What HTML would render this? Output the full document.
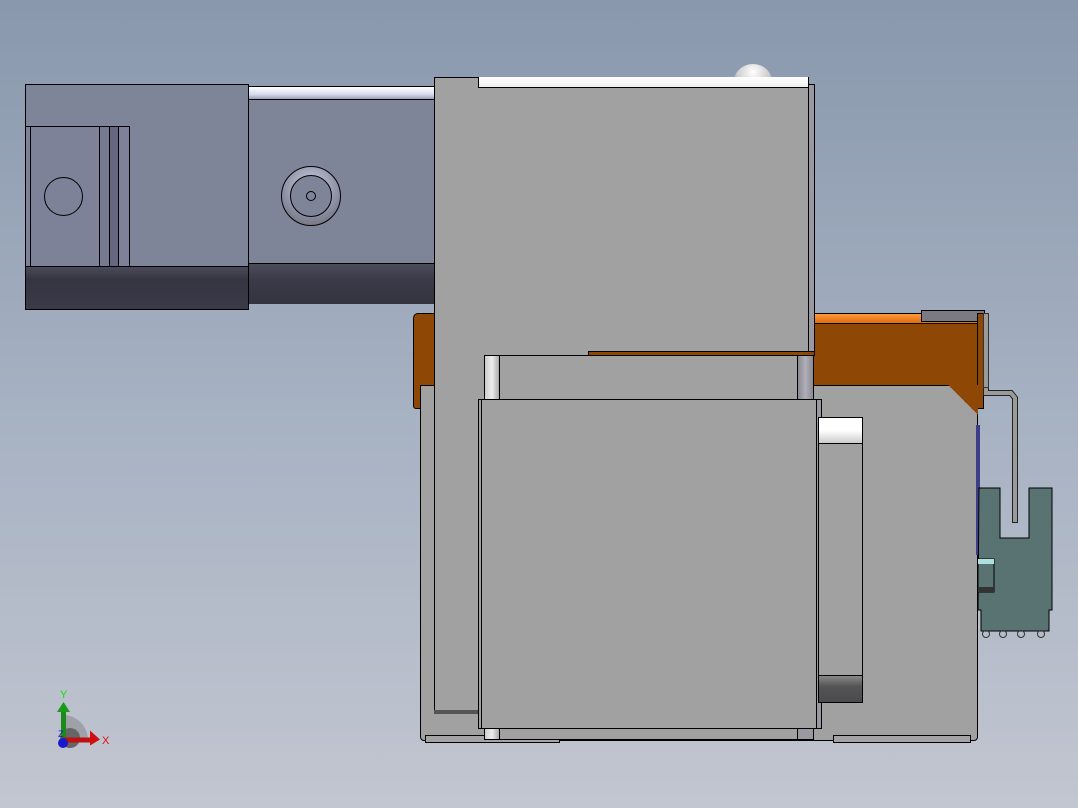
<!DOCTYPE html>
<html><head><style>
body{margin:0;width:1078px;height:808px;overflow:hidden;background:linear-gradient(#8998ad,#a6b1c2 50%,#c2c6d0);position:relative;font-family:"Liberation Sans",sans-serif}
div{position:absolute;box-sizing:border-box}
.b{border:1px solid #000}
.g{background:#a1a1a1}
</style></head><body>
<!-- left block -->
<div class="b" style="left:25px;top:84px;width:224px;height:226px;background:#7f8599"></div>
<div class="b" style="left:25px;top:126px;width:105px;height:141px;background:#7d8298"></div>
<div style="left:30px;top:127px;width:1px;height:139px;background:#000"></div>
<div style="left:99px;top:127px;width:11px;height:139px;background:#767a90;border-left:1px solid #000;border-right:1px solid #000"></div>
<div style="left:110px;top:127px;width:9px;height:139px;background:#666680;border-right:1px solid #000"></div>
<div class="b" style="left:44px;top:177px;width:39px;height:39px;border-radius:50%"></div>
<div style="left:26px;top:266px;width:222px;height:43px;background:linear-gradient(#4a4a58,#353542 30%,#3a3a48);border-top:1px solid #000"></div>
<!-- rail -->
<div class="b" style="left:248px;top:86px;width:188px;height:218px;background:#7f8599"></div>
<div style="left:249px;top:87px;width:186px;height:13px;background:linear-gradient(#fff,#d8dcef 60%,#9ba0b8);border-bottom:1px solid #000"></div>
<div style="left:249px;top:263px;width:186px;height:41px;background:linear-gradient(#4c4c5a,#3a3a48 40%,#343440);border-top:1px solid #000"></div>
<div style="left:281px;top:166px;width:60px;height:60px;border-radius:50%;border:1px solid #000;background:radial-gradient(circle at 50% 35%,#d0d2e4,#8a8ca0 60%,#666)"></div>
<div style="left:290px;top:175px;width:42px;height:42px;border-radius:50%;border:1px solid #000;background:#7f8599"></div>
<div style="left:306px;top:191px;width:10px;height:10px;border-radius:50%;border:1px solid #000"></div>
<!-- knob -->
<div style="left:733px;top:64px;width:40px;height:20px;border-radius:20px 20px 0 0;background:radial-gradient(circle at 50% 40%,#fff,#ccc 70%,#888)"></div>
<!-- orange -->
<div class="b" style="left:413px;top:313px;width:22px;height:96px;background:#8f4705;border-radius:5px 0 0 3px"></div>
<div class="b" style="left:813px;top:313px;width:166px;height:73px;background:#8f4705"></div>
<div style="left:814px;top:314px;width:164px;height:10px;background:linear-gradient(#ff9a3a,#e06d10);border-bottom:1px solid #000"></div>
<div class="b" style="left:921px;top:310px;width:64px;height:12px;background:#7a7a80"></div>
<div class="b" style="left:977px;top:313px;width:7px;height:96px;background:#8f4705"></div>
<div style="left:983px;top:313px;width:6px;height:75px;background:#9a9a9a;border:1px solid #333"></div>
<!-- wire -->
<svg style="position:absolute;left:0;top:0" width="1078" height="808"><path d="M986 388 L986 393 L1011 393 L1015 398 L1015 523" fill="none" stroke="#222" stroke-width="6"/><path d="M986 388 L986 393 L1011 393 L1015 398 L1015 523" fill="none" stroke="#9a9a9a" stroke-width="4"/></svg>
<!-- lower body -->
<div class="b g" style="left:420px;top:385px;width:558px;height:356px;border-radius:0 0 4px 4px"></div>
<div style="left:948px;top:385px;width:30px;height:30px;background:linear-gradient(225deg,#8f4705 50%,transparent 50%)"></div>
<div style="left:976px;top:425px;width:4px;height:130px;background:#3e3e88"></div>
<div class="b" style="left:425px;top:735px;width:135px;height:8px;background:#a4a4a4"></div>
<div class="b" style="left:833px;top:735px;width:138px;height:8px;background:#a4a4a4"></div>
<!-- main column -->
<div class="b g" style="left:434px;top:77px;width:375px;height:637px"></div>
<div style="left:478px;top:77px;width:331px;height:11px;background:linear-gradient(#fff,#eee);border:1px solid #000;border-top:none"></div>
<div class="b" style="left:808px;top:84px;width:7px;height:271px;background:#9a98a0"></div>
<div style="left:434px;top:710px;width:46px;height:4px;background:#555"></div>
<div style="left:588px;top:351px;width:227px;height:5px;background:#8f4705;border:1px solid #000"></div>
<!-- upper rect -->
<div class="b g" style="left:484px;top:355px;width:330px;height:45px"></div>
<div style="left:485px;top:356px;width:15px;height:43px;background:linear-gradient(90deg,#ccc,#eee,#aaa);border-right:1px solid #000"></div>
<div style="left:797px;top:356px;width:16px;height:43px;background:linear-gradient(90deg,#8a8890,#b0aeb6,#8a8890);border-left:1px solid #000"></div>
<div class="b g" style="left:484px;top:726px;width:330px;height:14px"></div>
<div style="left:485px;top:727px;width:15px;height:12px;background:linear-gradient(90deg,#ccc,#eee,#aaa);border-right:1px solid #000"></div>
<div style="left:797px;top:727px;width:16px;height:12px;background:#9a98a0;border-left:1px solid #000"></div>
<!-- front plate -->
<div class="b g" style="left:478px;top:399px;width:344px;height:330px"></div>
<div style="left:481px;top:400px;width:1px;height:328px;background:#000"></div>
<div style="left:816px;top:400px;width:5px;height:328px;background:#9a98a0;border-left:1px solid #000"></div>
<!-- slot -->
<div class="b g" style="left:818px;top:417px;width:45px;height:286px"></div>
<div style="left:819px;top:418px;width:43px;height:26px;background:linear-gradient(#fff,#fff 50%,#ccc);border-bottom:1px solid #000"></div>
<div style="left:819px;top:675px;width:43px;height:27px;background:linear-gradient(#888,#555 40%,#4a4a4e);border-top:1px solid #000"></div>
<!-- connector -->
<svg style="position:absolute;left:0;top:0" width="1078" height="808"><path d="M979 488 L1000 488 L1000 538 L1029 538 L1029 488 L1052 488 L1052 610 L1049 610 L1049 631 L981 631 L981 610 L978 610 Z" fill="#597373" stroke="#000" stroke-width="1"/>
<rect x="978" y="559" width="16" height="33" fill="#597373" stroke="#000"/><rect x="978" y="559" width="16" height="5" fill="#aee0e0"/><rect x="978" y="587" width="16" height="5" fill="#333"/>
<g fill="none" stroke="#333"><circle cx="986" cy="634" r="3.5"/><circle cx="1003" cy="634" r="3.5"/><circle cx="1021" cy="634" r="3.5"/><circle cx="1041" cy="634" r="3.5"/></g>
<path d="M1015 398 L1015 523" stroke="#222" stroke-width="6"/><path d="M1015 398 L1015 522" stroke="#9a9a9a" stroke-width="4"/>
<!-- axis -->
<path d="M63 740 L63 715 A25 25 0 0 1 88 740 Z" fill="#9ea2a8"/><circle cx="70" cy="738" r="10" fill="#666"/>
<rect x="61" y="710" width="5" height="30" fill="#1a8a1a"/><polygon points="57,712 63.5,702 70,712" fill="#1a9a1a"/>
<rect x="63" y="740" width="28" height="5" fill="#c01010" transform="translate(0,-2.5)"/><polygon points="90,733 100,742 90,748" fill="#d01010" transform="translate(0,-2.5)"/>
<circle cx="63" cy="743" r="5" fill="#1a1acc"/>
<text x="60" y="698" fill="#10e010" font-size="11" font-family="Liberation Sans">Y</text>
<text x="102" y="744" fill="#e01010" font-size="11" font-family="Liberation Sans">X</text>
<text x="58" y="737" fill="#1a1acc" font-size="9" font-family="Liberation Sans">Z</text>
</svg>
</body></html>
